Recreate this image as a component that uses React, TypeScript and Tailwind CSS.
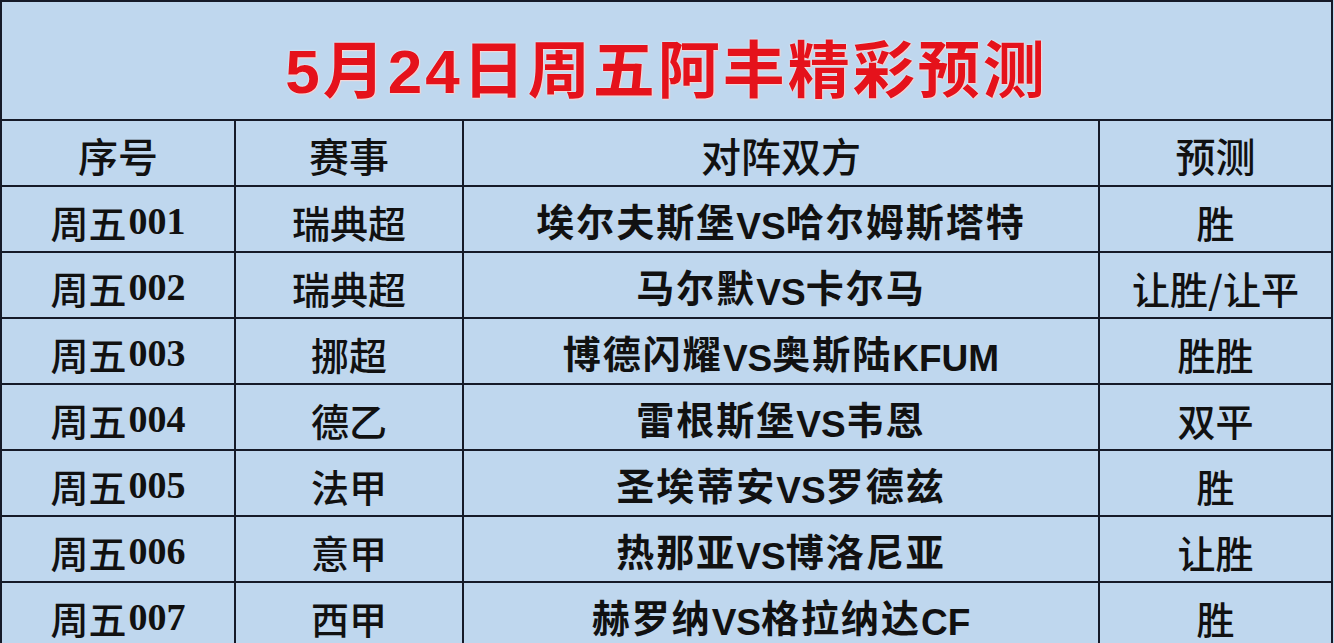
import React from "react";

const rows = [
  { no: "001", league: "瑞典超", match: ["埃尔夫斯堡", "VS", "哈尔姆斯塔特"], pick: "胜" },
  { no: "002", league: "瑞典超", match: ["马尔默", "VS", "卡尔马"], pick: "让胜/让平" },
  { no: "003", league: "挪超", match: ["博德闪耀", "VS", "奥斯陆", "KFUM"], pick: "胜胜" },
  { no: "004", league: "德乙", match: ["雷根斯堡", "VS", "韦恩"], pick: "双平" },
  { no: "005", league: "法甲", match: ["圣埃蒂安", "VS", "罗德兹"], pick: "胜" },
  { no: "006", league: "意甲", match: ["热那亚", "VS", "博洛尼亚"], pick: "让胜" },
  { no: "007", league: "西甲", match: ["赫罗纳", "VS", "格拉纳达", "CF"], pick: "胜" },
];

const cell =
  "flex items-center justify-center border-r-2 border-b-2 border-[#151a28] h-[66px] text-[#111111] pt-1";

const isLatin = (s: string) => /^[A-Z]+$/.test(s);

export default function App() {
  return (
    <div className="w-[1334px] h-[643px] overflow-hidden bg-[#bfd7ee]">
      <div className="w-[1333px] border-l-2 border-t-2 border-[#151a28]">
        {/* title */}
        <div className="h-[119px] flex items-center justify-center border-r-2 border-b-2 border-[#151a28] pt-4">
          <h1 className="font-['Noto_Sans_CJK_SC',sans-serif] font-semibold text-[62px] leading-none tracking-[3px] text-[#e5121b] [text-shadow:0_0_2px_#ffffff,1px_1px_1px_#f5c6c6]">
            <span className="font-['Liberation_Sans',sans-serif] font-bold">5</span>月
            <span className="font-['Liberation_Sans',sans-serif] font-bold">24</span>日周五阿丰精彩预测
          </h1>
        </div>

        <div className="grid grid-cols-[234px_228px_636px_233px]">
          {/* header */}
          {["序号", "赛事", "对阵双方", "预测"].map((h) => (
            <div
              key={h}
              className={`${cell} font-['Noto_Sans_CJK_SC',serif] font-medium text-[40px]`}
            >
              {h}
            </div>
          ))}

          {rows.map((r) => (
            <React.Fragment key={r.no}>
              <div className={`${cell} text-[38px] font-medium font-['Noto_Sans_CJK_SC',serif]`}>
                周五
                <span className="font-['Liberation_Serif',serif] font-bold ml-0.5">{r.no}</span>
              </div>
              <div className={`${cell} text-[38px] font-medium font-['Noto_Sans_CJK_SC',serif]`}>
                {r.league}
              </div>
              <div className={`${cell} pt-2 text-[38px] font-bold font-['Noto_Sans_CJK_SC',sans-serif]`}>
                <span>
                  {r.match.map((p, i) =>
                    isLatin(p) ? (
                      <span
                        key={i}
                        className="font-['Liberation_Sans',sans-serif] text-[37px] align-[-3px]"
                      >
                        {p}
                      </span>
                    ) : (
                      <span key={i} className="tracking-[2px]">
                        {p}
                      </span>
                    )
                  )}
                </span>
              </div>
              <div className={`${cell} text-[38px] font-medium font-['Noto_Sans_CJK_SC',serif]`}>
                {r.pick}
              </div>
            </React.Fragment>
          ))}
        </div>
      </div>
    </div>
  );
}
